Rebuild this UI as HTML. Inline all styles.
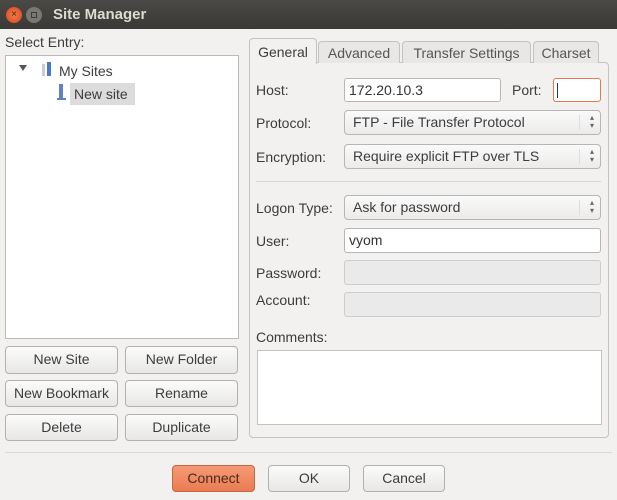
<!DOCTYPE html>
<html><head><style>
*{box-sizing:border-box;margin:0;padding:0}
body{width:617px;height:500px;background:#f2f1f0;font-family:"Liberation Sans",sans-serif;font-size:14px;color:#3c3c3c;position:relative;overflow:hidden}
.a{position:absolute}
.t{position:absolute;white-space:nowrap;line-height:16px}
.btn{position:absolute;border:1px solid #b3b1ad;border-radius:4px;background:linear-gradient(#fbfbfb,#e8e7e5);text-align:center;line-height:25px;color:#3c3c3c}
.in{position:absolute;border:1px solid #b8b6b2;border-radius:3px;background:#fff;padding-left:4px;line-height:22px;color:#333}
.dis{background:#ebeaea;border-color:#cfcdca}
.cb{position:absolute;border:1px solid #b8b6b2;border-radius:4px;background:linear-gradient(#fafafa,#ecebea);padding-left:8px;line-height:23px;color:#3c3c3c}
.cb:after{content:"";position:absolute;right:20px;top:4px;bottom:4px;border-left:1px solid #ddd}
.ar{position:absolute;right:6px;top:3px;font-size:8px;line-height:8px;color:#666}
.tab{position:absolute;border:1px solid #c5c3bf;border-bottom:none;border-radius:4px 4px 0 0;background:#e8e7e5;text-align:center;line-height:22px;color:#555}
</style></head><body>
<div class="a" style="left:0;top:0;width:617px;height:29px;background:linear-gradient(#4a4945,#3a3935)"></div>
<div class="a" style="left:6px;top:7px;width:16px;height:16px;border-radius:50%;background:radial-gradient(#f37b4f,#d9441b);color:#4a1e0c;font-size:10px;line-height:16px;text-align:center">×</div>
<div class="a" style="left:26px;top:7px;width:16px;height:16px;border-radius:50%;background:#7a7873"><div class="a" style="left:5px;top:5px;width:6px;height:6px;border:1px solid #3e3d3a"></div></div>
<div class="t" style="left:53px;top:7px;color:#dfdbd2;font-weight:bold;font-size:15px">Site Manager</div>

<div class="t" style="left:5px;top:34px">Select Entry:</div>
<div class="a" style="left:5px;top:55px;width:234px;height:284px;background:#fff;border:1px solid #bdbbb7"></div>
<div class="a" style="left:19px;top:65px;width:0;height:0;border-left:4px solid transparent;border-right:4px solid transparent;border-top:6px solid #555"></div>
<div class="a" style="left:42px;top:64px;width:3px;height:12px;background:#ccc"></div>
<div class="a" style="left:47px;top:62px;width:4px;height:14px;background:#4a78c8"></div>
<div class="t" style="left:59px;top:63px">My Sites</div>
<div class="a" style="left:59px;top:84px;width:4px;height:14px;background:#5d82c8"></div>
<div class="a" style="left:57px;top:98px;width:9px;height:2px;background:#5d82c8"></div>
<div class="a" style="left:70px;top:83px;width:65px;height:22px;background:#dcdcdc"></div>
<div class="t" style="left:74px;top:86px">New site</div>

<div class="btn" style="left:5px;top:346px;width:113px;height:28px">New Site</div>
<div class="btn" style="left:125px;top:346px;width:113px;height:28px">New Folder</div>
<div class="btn" style="left:5px;top:380px;width:113px;height:27px">New Bookmark</div>
<div class="btn" style="left:125px;top:380px;width:113px;height:27px">Rename</div>
<div class="btn" style="left:5px;top:414px;width:113px;height:27px">Delete</div>
<div class="btn" style="left:125px;top:414px;width:113px;height:27px">Duplicate</div>

<div class="a" style="left:249px;top:62px;width:360px;height:376px;border:1px solid #c5c3bf;border-radius:0 4px 4px 4px;background:#f2f1f0"></div>
<div class="tab" style="left:318px;top:41px;width:82px;height:22px">Advanced</div>
<div class="tab" style="left:402px;top:41px;width:129px;height:22px">Transfer Settings</div>
<div class="tab" style="left:533px;top:41px;width:66px;height:22px">Charset</div>
<div class="tab" style="left:249px;top:38px;width:68px;height:26px;background:#f2f1f0;line-height:26px;color:#3c3c3c">General</div>

<div class="t" style="left:256px;top:82px">Host:</div>
<div class="in" style="left:344px;top:78px;width:157px;height:24px">172.20.10.3</div>
<div class="t" style="left:512px;top:82px">Port:</div>
<div class="in" style="left:553px;top:78px;width:48px;height:24px;border-color:#e07a4f"><div class="a" style="left:3px;top:4px;width:1px;height:15px;background:#333"></div></div>
<div class="t" style="left:256px;top:115px">Protocol:</div>
<div class="cb" style="left:344px;top:110px;width:257px;height:25px">FTP - File Transfer Protocol<div class="ar">▴<br>▾</div></div>
<div class="t" style="left:256px;top:149px">Encryption:</div>
<div class="cb" style="left:344px;top:144px;width:257px;height:25px">Require explicit FTP over TLS<div class="ar">▴<br>▾</div></div>
<div class="a" style="left:256px;top:181px;width:345px;height:1px;background:#d8d6d2"></div>
<div class="t" style="left:256px;top:200px">Logon Type:</div>
<div class="cb" style="left:344px;top:195px;width:257px;height:25px">Ask for password<div class="ar">▴<br>▾</div></div>
<div class="t" style="left:256px;top:233px">User:</div>
<div class="in" style="left:344px;top:228px;width:257px;height:25px">vyom</div>
<div class="t" style="left:256px;top:265px">Password:</div>
<div class="in dis" style="left:344px;top:260px;width:257px;height:25px"></div>
<div class="t" style="left:256px;top:292px">Account:</div>
<div class="in dis" style="left:344px;top:292px;width:257px;height:25px"></div>
<div class="t" style="left:256px;top:329px">Comments:</div>
<div class="a" style="left:257px;top:350px;width:345px;height:75px;background:#fff;border:1px solid #c5c3bf"></div>

<div class="a" style="left:5px;top:452px;width:607px;height:1px;background:#dcdad6"></div>
<div class="btn" style="left:172px;top:465px;width:83px;height:27px;background:linear-gradient(#f59a75,#ea7c52);border-color:#c8663f;color:#4a2a1c">Connect</div>
<div class="btn" style="left:268px;top:465px;width:82px;height:27px">OK</div>
<div class="btn" style="left:363px;top:465px;width:82px;height:27px">Cancel</div>
</body></html>
